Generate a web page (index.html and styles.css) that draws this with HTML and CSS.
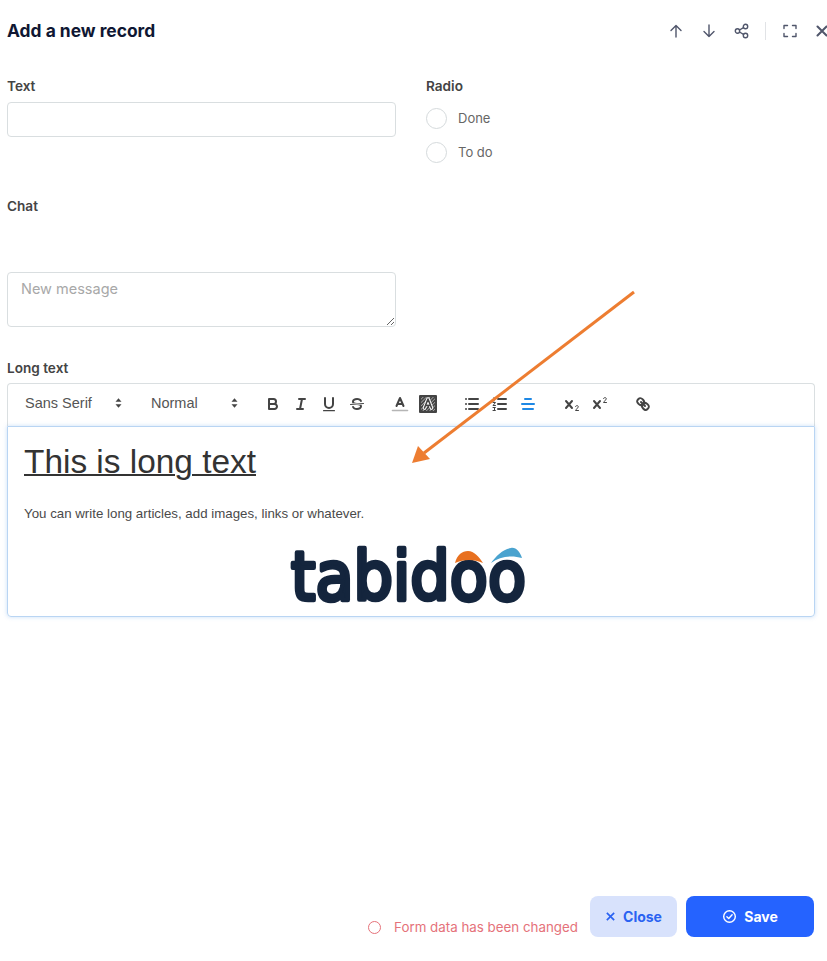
FILE: index.html
```html
<!DOCTYPE html>
<html lang="en">
<head>
    <meta charset="UTF-8">
    <meta name="viewport" content="width=device-width, initial-scale=1.0">
    <title>Add a new record</title>
    <link rel="stylesheet" href="styles.css">
</head>
<body>
    <div class="page">
        <div class="header">
            <div class="title">Add a new record</div>
            <div class="header-icons">
                <div class="head-btn"><svg viewBox="0 0 16 16"><path d="M8 14V2.500M3 7.500l5-5 5 5"/></svg></div>
                <div class="head-btn"><svg viewBox="0 0 16 16"><path d="M8 2v11.500M3 8.500l5 5 5-5"/></svg></div>
                <div class="head-btn"><svg viewBox="0 0 16 16"><circle cx="3.500" cy="8" r="2.200"/><circle cx="11.500" cy="3.500" r="2.200"/><circle cx="11.500" cy="12.500" r="2.200"/><path d="M5.500 7l4-2.300M5.500 9l4 2.300"/></svg></div>
                <div class="head-divider"></div>
                <div class="head-btn"><svg viewBox="0 0 16 16"><path d="M2 5.500V2.500h3.500M10.500 2.500H14v3M14 10.500v3h-3.500M5.500 13.500H2v-3"/></svg></div>
                <div class="head-btn head-close"><svg viewBox="0 0 16 16"><path class="thick" d="M3.500 3.500l9 9M12.500 3.500l-9 9"/></svg></div>
            </div>
        </div>

        <div class="row">
            <div class="col-left">
                <div class="label">Text</div>
                <input class="text-input" type="text">
            </div>
            <div class="col-right">
                <div class="label">Radio</div>
                <div class="radio-list">
                    <div class="radio-row"><span class="radio"></span>Done</div>
                    <div class="radio-row"><span class="radio"></span>To do</div>
                </div>
            </div>
        </div>

        <div class="label chat-label">Chat</div>
        <textarea class="chat-input" placeholder="New message"></textarea>

        <div class="label long-label">Long text</div>
        <div class="toolbar">
            <div class="picker picker-font">Sans Serif<svg viewBox="0 0 10 14"><path d="M5 1.500L8.500 5.500H1.500zM5 12.500L1.500 8.500H8.500z"/></svg></div>
            <div class="picker picker-size">Normal<svg viewBox="0 0 10 14"><path d="M5 1.500L8.500 5.500H1.500zM5 12.500L1.500 8.500H8.500z"/></svg></div>
            <div class="tool-group group-tight">
                <div class="tool"><svg viewBox="0 0 18 18"><path d="M5,4H9.500A2.500,2.500,0,0,1,12,6.500v0A2.500,2.500,0,0,1,9.500,9H5V4Z"/><path d="M5,9h5.500A2.500,2.500,0,0,1,13,11.500v0A2.500,2.500,0,0,1,10.500,14H5V9Z"/></svg></div>
                <div class="tool"><svg viewBox="0 0 18 18"><path d="M7 4h6M5 14h6M8 14l2-10"/></svg></div>
                <div class="tool"><svg viewBox="0 0 18 18"><path d="M5,3V9a4,4,0,0,0,4,4h0a4,4,0,0,0,4-4V3"/><rect class="fill" x="3" y="15" width="12" height="1.200" rx=".5"/></svg></div>
                <div class="tool"><svg viewBox="0 0 18 18"><path class="thin" d="M15.500 8.500L2.500 9.500"/><path class="fill" d="M9.007,8C6.542,7.791,6,7.519,6,6.500,6,5.792,7.283,5,9,5c1.571,0,2.765.679,2.969,1.309a1,1,0,0,0,1.900-.617C13.356,4.106,11.354,3,9,3,6.200,3,4,4.538,4,6.500a3.200,3.200,0,0,0,.5,1.843Z"/><path class="fill" d="M8.984,10C11.457,10.208,12,10.479,12,11.500c0,.708-1.283,1.500-3,1.500-1.571,0-2.765-.679-2.969-1.309a1,1,0,1,0-1.900.617C4.644,13.894,6.646,15,9,15c2.800,0,5-1.538,5-3.500a3.200,3.200,0,0,0-.5-1.843Z"/></svg></div>
            </div>
            <div class="tool-group">
                <div class="tool"><svg viewBox="0 0 18 18"><path class="grey" d="M1.500 15.500h15"/><path d="M5.500 11L9 3l3.500 8M11.630 9H6.380"/></svg></div>
                <div class="tool"><svg viewBox="0 0 18 18"><defs><pattern id="hatch" width="2.400" height="2.400" patternUnits="userSpaceOnUse" patternTransform="rotate(45)"><rect width="1" height="2.400" fill="#999"/></pattern></defs><rect x="1" y="1" width="16" height="16" fill="url(#hatch)"/><path class="knock" d="M5.500 13L9 4l3.500 9"/><path class="mid" d="M5.500 13L9 4l3.500 9M11.500 10.500h-5"/></svg></div>
            </div>
            <div class="tool-group">
                <div class="tool"><svg viewBox="0 0 18 18"><path d="M6 4h9M6 9h9M6 14h9M3 4h.01M3 9h.01M3 14h.01"/></svg></div>
                <div class="tool"><svg viewBox="0 0 18 18"><path d="M7 4h8M7 9h8M7 14h8"/><path class="thin" d="M3 2.500V6M2 7.500h2.500L2 10.500h2.500M2 12.500h2.500L3 14l1.500 1.500H2"/></svg></div>
                <div class="tool active"><svg viewBox="0 0 18 18"><path d="M15 9H3M14 14H4M12 4H6"/></svg></div>
            </div>
            <div class="tool-group group-tight">
                <div class="tool"><svg viewBox="0 0 18 18"><path d="M3 6l6 7M9 6l-6 7"/><path class="thin" d="M12.500 11.500c.3-1.300 2.800-1.300 2.800.3 0 1.400-2.800 2.500-2.800 3.700h3"/></svg></div>
                <div class="tool"><svg viewBox="0 0 18 18"><path d="M3 6l6 7M9 6l-6 7"/><path class="thin" d="M12.500 3.500c.3-1.300 2.800-1.300 2.800.3 0 1.400-2.800 2.500-2.800 3.700h3"/></svg></div>
            </div>
            <div class="tool-group">
                <div class="tool"><svg viewBox="0 0 18 18"><path d="M7 7l4 4"/><path d="M8.900,4.577a3.476,3.476,0,0,1,.36,4.679A3.476,3.476,0,0,1,4.577,8.900C3.185,7.500,2.035,6.400,4.217,4.217S7.500,3.185,8.900,4.577Z"/><path d="M13.423,9.100a3.476,3.476,0,0,0-4.679-.36,3.476,3.476,0,0,0,.36,4.679c1.392,1.392,2.500,2.542,4.679.36S14.815,10.500,13.423,9.100Z"/></svg></div>
            </div>
        </div>
        <div class="editor">
            <h1 class="editor-title">This is long text</h1>
            <p class="editor-text">You can write long articles, add images, links or whatever.</p>
            <svg class="logo" viewBox="0 0 240 62">
                <text class="logo-text" x="4" y="57" textLength="235" lengthAdjust="spacingAndGlyphs">tabidoo</text>
                <path class="sail-orange" d="M168 20C170 12 175 8 181 8C187 8 192 14 196 20C187 16 177 16 168 20Z"/>
                <path class="sail-blue" d="M204 20C209 13 216 6 224 5C229 4 233 9 235 15C225 12 213 13 204 20Z"/>
            </svg>
        </div>

        <div class="footer">
            <div class="status"><span class="status-dot"></span>Form data has been changed</div>
            <div class="btn btn-close"><svg viewBox="0 0 12 12"><path d="M2 2l8 8M10 2l-8 8"/></svg>Close</div>
            <div class="btn btn-save"><svg viewBox="0 0 16 16"><circle cx="8" cy="8" r="6.200"/><path d="M5.200 8.200l2 2 3.600-4"/></svg>Save</div>
        </div>

        <svg class="arrow" viewBox="0 0 827 961">
            <path class="arrow-line" d="M634 292L424 453"/>
            <path class="arrow-head" d="M412 463L418 446L430 459Z"/>
        </svg>
    </div>
</body>
</html>
```

FILE: styles.css
```css
* {
    box-sizing: border-box;
}
body {
    margin: 0;
    background: #fff;
    font-family: Inter, sans-serif;
    color: #444;
}
.page {
    position: relative;
    width: 827px;
    height: 961px;
    padding: 0 13px 24px 7px;
    display: flex;
    flex-direction: column;
    overflow: hidden;
}
.header {
    height: 61px;
    flex: none;
    display: flex;
    align-items: center;
    justify-content: space-between;
    margin-right: -13px;
}
.title {
    font-size: 17.400px;
    font-weight: 700;
    color: #0f1733;
}
.header-icons {
    display: flex;
    align-items: center;
}
.head-btn {
    width: 33px;
    height: 20px;
    display: flex;
    align-items: center;
    justify-content: center;
}
.head-btn svg {
    width: 16px;
    height: 16px;
    fill: none;
    stroke: #50566b;
    stroke-width: 1.400;
    stroke-linecap: round;
    stroke-linejoin: round;
}
.head-btn svg .thick {
    stroke-width: 2;
}
.head-divider {
    width: 1px;
    height: 18px;
    background: #e1e3e6;
    margin: 0 7px 0 7px;
}
.head-close {
    width: 21px;
    justify-content: flex-start;
    padding-left: 8px;
    flex: none;
}
.head-close svg {
    flex: none;
}
.label {
    font-size: 13.600px;
    font-weight: 600;
    line-height: 16px;
    height: 16px;
    color: #444;
}
.row {
    margin-top: 17px;
    height: 91px;
    display: flex;
    gap: 30px;
    flex: none;
}
.col-left {
    width: 389px;
}
.text-input {
    display: block;
    width: 100%;
    height: 35px;
    margin-top: 8px;
    border: 1px solid #d9dee0;
    border-radius: 4px;
    background: #fff;
}
.radio-list {
    margin-top: 7px;
}
.radio-row {
    height: 34px;
    display: flex;
    align-items: center;
    gap: 11px;
    font-size: 13px;
    color: #666;
}
.radio {
    width: 21px;
    height: 21px;
    border: 1px solid #d5dadc;
    border-radius: 50%;
}
.chat-label {
    margin-top: 29px;
}
.chat-input {
    display: block;
    flex: none;
    width: 389px;
    height: 55px;
    margin-top: 58px;
    padding: 6px 13px;
    border: 1px solid #d9dee0;
    border-radius: 4px;
    font-family: Inter, sans-serif;
    font-size: 14.500px;
    line-height: 20px;
}
.chat-input::placeholder {
    color: #a8a8a8;
}
.long-label {
    margin-top: 33px;
}
.toolbar {
    flex: none;
    height: 43px;
    margin: 7px -1px 0 0;
    padding: 0 0 2px 9px;
    display: flex;
    align-items: center;
    border: 1px solid #dadfe1;
    border-bottom: 0;
    border-radius: 4px 4px 0 0;
    font-family: "Liberation Sans", sans-serif;
    font-size: 14.500px;
    color: #555;
}
.picker {
    height: 24px;
    display: flex;
    align-items: center;
    justify-content: space-between;
    padding: 0 4px 2px 8px;
}
.picker svg {
    width: 9px;
    height: 12px;
    fill: #444;
}
.picker-font {
    width: 110px;
    margin-right: 16px;
}
.picker-size {
    width: 100px;
    margin-right: 16px;
}
.tool-group {
    display: flex;
    margin-right: 16px;
}
.group-tight {
    margin-right: 15px;
}
.tool {
    width: 28px;
    height: 24px;
    display: flex;
    align-items: center;
    justify-content: center;
}
.tool svg {
    width: 18px;
    height: 18px;
    fill: none;
    stroke: #444;
    stroke-width: 2;
    stroke-linecap: round;
    stroke-linejoin: round;
}
.tool svg .thin {
    stroke-width: 1;
}
.tool svg .fill {
    fill: #444;
    stroke: none;
}
.tool svg .grey {
    stroke: #b5b5b5;
    stroke-width: 1.600;
}
.tool svg .knock {
    stroke: #fff;
    stroke-width: 3.500;
}
.tool svg .mid {
    stroke-width: 1.600;
}
.tool.active svg {
    stroke: #1e88e5;
}
.editor {
    flex: none;
    height: 191px;
    margin-right: -1px;
    padding: 0 15px 0 16px;
    border: 1px solid #b9d5f3;
    border-radius: 0 0 4px 4px;
    box-shadow: 0 0 4px rgba(100, 160, 230, 0.35);
    font-family: "Liberation Sans", sans-serif;
    color: #444;
    display: flex;
    flex-direction: column;
}
.editor-title {
    margin: 14px 0 0;
    font-size: 33.400px;
    font-weight: 400;
    line-height: 42px;
    text-decoration: underline;
    text-decoration-thickness: 2px;
    color: #333;
}
.editor-text {
    margin: 22px 0 0;
    font-size: 13.300px;
    line-height: 17px;
    color: #4a4a4a;
}
.logo {
    display: block;
    width: 240px;
    height: 62px;
    margin: 21px 0 0 263px;
    flex: none;
    overflow: visible;
}
.logo-text {
    font-family: "DejaVu Sans", sans-serif;
    font-size: 68px;
    fill: #14253d;
    stroke: #14253d;
    stroke-width: 4.500;
    stroke-linejoin: round;
}
.sail-orange {
    fill: #e8701f;
}
.sail-blue {
    fill: #4aa3cf;
}
.footer {
    margin-top: auto;
    display: flex;
    align-items: flex-end;
    justify-content: flex-end;
    flex: none;
}
.status {
    display: flex;
    align-items: center;
    gap: 13px;
    height: 20px;
    margin: 0 12px 0 0;
    font-size: 13.350px;
    color: #e5727a;
}
.status-dot {
    width: 13px;
    height: 13px;
    border: 1.500px solid #e5727a;
    border-radius: 50%;
}
.btn {
    height: 41px;
    display: flex;
    align-items: center;
    justify-content: center;
    gap: 7px;
    border-radius: 8px;
    font-size: 14px;
    font-weight: 700;
}
.btn-close {
    width: 87px;
    background: #d8e2fc;
    color: #2a62f2;
    margin-right: 9px;
}
.btn-close svg {
    width: 11px;
    height: 11px;
    fill: none;
    stroke: #2a62f2;
    stroke-width: 1.800;
}
.btn-save {
    width: 128px;
    background: #2563ff;
    color: #fff;
}
.btn-save svg {
    width: 15px;
    height: 15px;
    fill: none;
    stroke: #fff;
    stroke-width: 1.500;
    stroke-linecap: round;
    stroke-linejoin: round;
}
.arrow {
    position: absolute;
    top: 0;
    left: 0;
    width: 827px;
    height: 961px;
    pointer-events: none;
}
.arrow-line {
    fill: none;
    stroke: #ed7d31;
    stroke-width: 3;
}
.arrow-head {
    fill: #ed7d31;
}
```
